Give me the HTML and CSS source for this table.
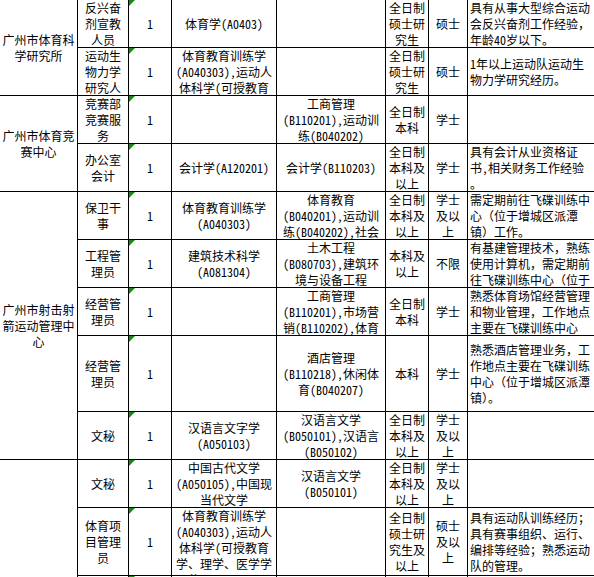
FILE: index.html
```html
<!DOCTYPE html>
<html lang="zh-CN">
<head>
<meta charset="utf-8">
<title>招聘岗位表</title>
<link rel="stylesheet" href="styles.css">
</head>
<body>
<div class="sheet">
  <!-- row 1 -->
  <div class="c org org-a"><span>广州市体育科<br>学研究所</span></div>
  <div class="c"><span>反兴奋<br>剂宣教<br>人员</span></div>
  <div class="c num"><span>1</span></div>
  <div class="c"><span>体育学(A0403)</span></div>
  <div class="c"><span></span></div>
  <div class="c"><span>全日制<br>硕士研<br>究生</span></div>
  <div class="c"><span>硕士</span></div>
  <div class="c note"><span>具有从事大型综合运动<br>会反兴奋剂工作经验，<br>年龄40岁以下。</span></div>
  <!-- row 2 -->
  <div class="c"><span>运动生<br>物力学<br>研究人<br>员</span></div>
  <div class="c num"><span>1</span></div>
  <div class="c"><span>体育教育训练学<br>(A040303),运动人<br>体科学(可授教育<br>学、理学、医学学</span></div>
  <div class="c"><span></span></div>
  <div class="c"><span>全日制<br>硕士研<br>究生</span></div>
  <div class="c"><span>硕士</span></div>
  <div class="c note"><span>1年以上运动队运动生<br>物力学研究经历。</span></div>
  <!-- row 3 -->
  <div class="c org org-b"><span>广州市体育竞<br>赛中心</span></div>
  <div class="c"><span>竞赛部<br>竞赛服<br>务</span></div>
  <div class="c num"><span>1</span></div>
  <div class="c"><span></span></div>
  <div class="c"><span>工商管理<br>(B110201),运动训<br>练(B040202)</span></div>
  <div class="c"><span>全日制<br>本科</span></div>
  <div class="c"><span>学士</span></div>
  <div class="c note"><span></span></div>
  <!-- row 4 -->
  <div class="c"><span>办公室<br>会计</span></div>
  <div class="c num"><span>1</span></div>
  <div class="c"><span>会计学(A120201)</span></div>
  <div class="c"><span>会计学(B110203)</span></div>
  <div class="c"><span>全日制<br>本科及<br>以上</span></div>
  <div class="c"><span>学士</span></div>
  <div class="c note"><span>具有会计从业资格证<br>书,相关财务工作经验<br>。</span></div>
  <!-- row 5 -->
  <div class="c org org-c"><span>广州市射击射<br>箭运动管理中<br>心</span></div>
  <div class="c"><span>保卫干<br>事</span></div>
  <div class="c num"><span>1</span></div>
  <div class="c"><span>体育教育训练学<br>(A040303)</span></div>
  <div class="c"><span>体育教育<br>(B040201),运动训<br>练(B040202),社会<br>体育指导与管理</span></div>
  <div class="c"><span>全日制<br>本科及<br>以上</span></div>
  <div class="c"><span>学士<br>及以<br>上</span></div>
  <div class="c note"><span>需定期前往飞碟训练中<br>心（位于增城区派潭<br>镇）工作。</span></div>
  <!-- row 6 -->
  <div class="c"><span>工程管<br>理员</span></div>
  <div class="c num"><span>1</span></div>
  <div class="c"><span>建筑技术科学<br>(A081304)</span></div>
  <div class="c"><span>土木工程<br>(B080703),建筑环<br>境与设备工程<br>(B080704)</span></div>
  <div class="c"><span>本科及<br>以上</span></div>
  <div class="c"><span>不限</span></div>
  <div class="c note"><span>有基建管理技术，熟练<br>使用计算机，需定期前<br>往飞碟训练中心（位于<br>增城区派潭镇）工作。</span></div>
  <!-- row 7 -->
  <div class="c"><span>经营管<br>理员</span></div>
  <div class="c num"><span>1</span></div>
  <div class="c"><span></span></div>
  <div class="c"><span>工商管理<br>(B110201),市场营<br>销(B110202),体育<br>经济</span></div>
  <div class="c"><span>全日制<br>本科</span></div>
  <div class="c"><span>学士</span></div>
  <div class="c note"><span>熟悉体育场馆经营管理<br>和物业管理，工作地点<br>主要在飞碟训练中心</span></div>
  <!-- row 8 -->
  <div class="c"><span>经营管<br>理员</span></div>
  <div class="c num"><span>1</span></div>
  <div class="c"><span></span></div>
  <div class="c"><span>酒店管理<br>(B110218),休闲体<br>育(B040207)</span></div>
  <div class="c"><span>本科</span></div>
  <div class="c"><span>学士</span></div>
  <div class="c note"><span>熟悉酒店管理业务，工<br>作地点主要在飞碟训练<br>中心（位于增城区派潭<br>镇）。</span></div>
  <!-- row 9 -->
  <div class="c"><span>文秘</span></div>
  <div class="c num"><span>1</span></div>
  <div class="c"><span>汉语言文字学<br>(A050103)</span></div>
  <div class="c"><span>汉语言文学<br>(B050101),汉语言<br>(B050102)</span></div>
  <div class="c"><span>全日制<br>本科及<br>以上</span></div>
  <div class="c"><span>学士<br>及以<br>上</span></div>
  <div class="c note"><span></span></div>
  <!-- row 10 -->
  <div class="c org org-d"><span></span></div>
  <div class="c"><span>文秘</span></div>
  <div class="c num"><span>1</span></div>
  <div class="c"><span>中国古代文学<br>(A050105),中国现<br>当代文学</span></div>
  <div class="c"><span>汉语言文学<br>(B050101)</span></div>
  <div class="c"><span>全日制<br>本科及<br>以上</span></div>
  <div class="c"><span>学士<br>及以<br>上</span></div>
  <div class="c note"><span></span></div>
  <!-- row 11 -->
  <div class="c"><span>体育项<br>目管理<br>员</span></div>
  <div class="c num"><span>1</span></div>
  <div class="c"><span>体育教育训练学<br>(A040303),运动人<br>体科学(可授教育<br>学、理学、医学学<br>位)(A040303)</span></div>
  <div class="c"><span></span></div>
  <div class="c"><span>全日制<br>硕士研<br>究生及<br>以上</span></div>
  <div class="c"><span>硕士<br>及以<br>上</span></div>
  <div class="c note"><span>具有运动队训练经历；<br>具有赛事组织、运行、<br>编排等经验；熟悉运动<br>队的管理。</span></div>
  <!-- row 12 -->
  <div class="c"><span></span></div>
  <div class="c num"><span>1</span></div>
  <div class="c"><span></span></div>
  <div class="c"><span></span></div>
  <div class="c"><span></span></div>
  <div class="c"><span></span></div>
  <div class="c note"><span></span></div>
</div>
</body>
</html>
```

FILE: styles.css
```css
html, body {
  margin: 0;
  padding: 0;
  background: #fff;
  overflow: hidden;
}

body {
  width: 594px;
  height: 577px;
}

.sheet {
  display: grid;
  grid-template-columns: 77px 50px 42px 104px 108px 42px 38px 128px;
  grid-template-rows: 47px 47px 47px 47px 47px 47px 47px 75px 47px 47px 67px 47px;
  gap: 1px;
  padding: 1px;
  margin: -1px 0 0 -1px;
  width: max-content;
  background: #000;
  font-family: "Noto Sans Mono CJK SC", "Noto Sans CJK SC", sans-serif;
  font-size: 12px;
  line-height: 16px;
  color: #000;
}

.c {
  position: relative;
  display: flex;
  align-items: safe center;
  justify-content: center;
  text-align: center;
  white-space: nowrap;
  overflow: hidden;
  background: #fff;
  min-width: 0;
  min-height: 0;
}

.c > span {
  display: block;
}

.note {
  justify-content: flex-start;
  text-align: left;
  padding-left: 2px;
}

.org-a { grid-row: span 2; }
.org-b { grid-row: span 2; }
.org-c { grid-row: span 5; }
.org-d { grid-row: span 3; }

.num::before {
  content: "";
  position: absolute;
  left: 0;
  top: 0;
  width: 0;
  height: 0;
  border-top: 6px solid #138a13;
  border-right: 6px solid transparent;
}
```
